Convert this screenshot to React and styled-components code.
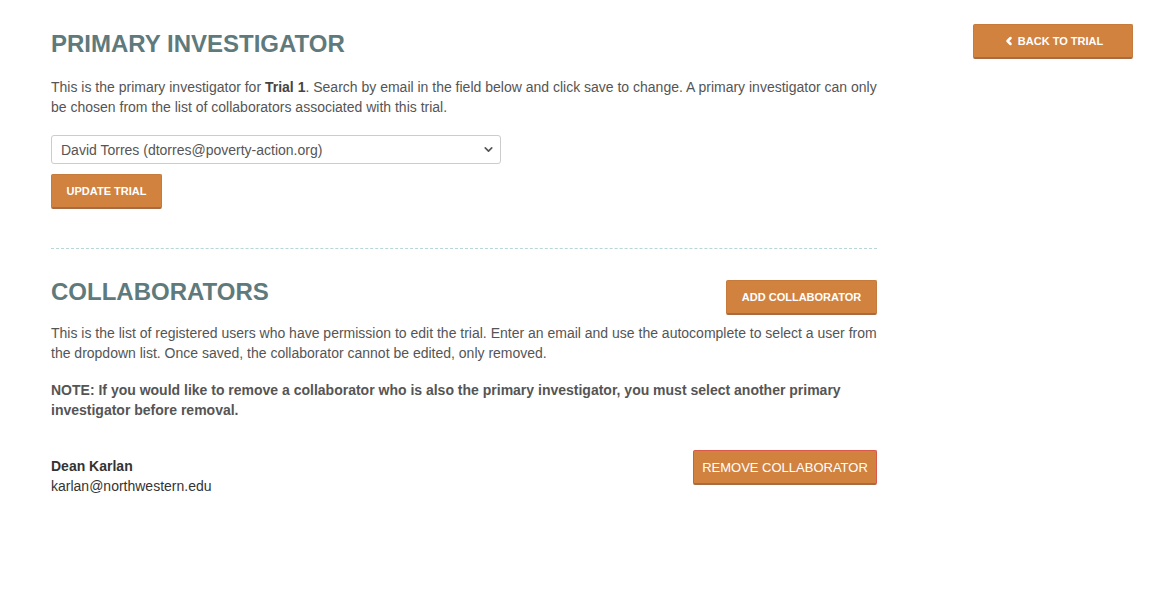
import React, { useState } from 'react'
import styled, { createGlobalStyle } from 'styled-components'
import { ChevronLeft, ChevronDown } from 'lucide-react'

const GlobalStyle = createGlobalStyle`
    body {
        margin: 0;
        background: #fff;
        font-family: "Liberation Sans", Arial, sans-serif;
        color: #555;
    }
`

const Page = styled.div`
    display: flex;
    padding: 24px 28px 40px 51px;
`
const Main = styled.div`
    width: 826px;
    padding-top: 7px;
`
const Aside = styled.div`
    flex: 1;
    display: flex;
    justify-content: flex-end;
    align-items: flex-start;
`
const Heading = styled.h2`
    margin: 0;
    font-size: 24px;
    line-height: 26px;
    font-weight: bold;
    color: #5e7a7c;
    text-transform: uppercase;
`
const Text = styled.p`
    margin: ${props => props.top || 0}px 0 0;
    font-size: 14px;
    line-height: 20px;
    color: #555;
    font-weight: ${props => props.bold ? 'bold' : 'normal'};
    b { color: #444; }
`
const Button = styled.button`
    display: inline-flex;
    align-items: center;
    justify-content: center;
    gap: 3px;
    width: ${props => props.width}px;
    height: 35px;
    margin-top: ${props => props.top || 0}px;
    padding: 0;
    background-color: #d2823f;
    color: #fff;
    font-family: "Liberation Sans", Arial, sans-serif;
    font-size: ${props => props.big ? 13 : 11}px;
    font-weight: ${props => props.big ? 'normal' : 'bold'};
    text-transform: uppercase;
    border: 1px solid ${props => props.danger ? '#d8584a' : '#c67a3c'};
    border-bottom: 2px solid #a66b43;
    border-radius: 2px;
    cursor: pointer;
    flex-shrink: 0;
`
const SelectWrap = styled.div`
    position: relative;
    width: 450px;
    margin-top: 18px;
`
const Select = styled.select`
    width: 100%;
    height: 29px;
    padding: 0 30px 0 9px;
    appearance: none;
    border: 1px solid #ccc;
    border-radius: 3px;
    background: #fff;
    color: #555;
    font-family: "Liberation Sans", Arial, sans-serif;
    font-size: 14px;
`
const Caret = styled.span`
    position: absolute;
    right: 6px;
    top: 8px;
    display: flex;
    color: #555;
    pointer-events: none;
`
const Divider = styled.hr`
    margin: 39px 0 30px;
    border: 0;
    border-top: 1px dashed #b7d6d6;
`
const HeadRow = styled.div`
    display: flex;
    justify-content: space-between;
    align-items: flex-start;
    button { margin-top: 1px; }
`
const CollabRow = styled.div`
    display: flex;
    justify-content: space-between;
    align-items: flex-start;
    margin-top: 30px;
`
const Person = styled.div`
    padding-top: 6px;
    font-size: 14px;
    line-height: 20px;
    color: #333;
`
const Name = styled.div`
    font-weight: bold;
    color: #333;
`

const App = () => {
    const [pi, setPi] = useState('dtorres')

    return (
        <>
            <GlobalStyle />
            <Page>
                <Main>
                    <Heading>Primary Investigator</Heading>
                    <Text top={20}>
                        This is the primary investigator for <b>Trial 1</b>. Search by email in the field below and click save to change. A primary investigator can only be chosen from the list of collaborators associated with this trial.
                    </Text>
                    <SelectWrap>
                        <Select value={pi} onChange={e => setPi(e.target.value)}>
                            <option value="dtorres">David Torres (dtorres@poverty-action.org)</option>
                            <option value="karlan">Dean Karlan (karlan@northwestern.edu)</option>
                        </Select>
                        <Caret><ChevronDown size={13} strokeWidth={3} /></Caret>
                    </SelectWrap>
                    <Button width={111} top={10}>Update Trial</Button>

                    <Divider />

                    <HeadRow>
                        <Heading>Collaborators</Heading>
                        <Button width={151}>Add Collaborator</Button>
                    </HeadRow>
                    <Text top={8}>
                        This is the list of registered users who have permission to edit the trial. Enter an email and use the autocomplete to select a user from the dropdown list. Once saved, the collaborator cannot be edited, only removed.
                    </Text>
                    <Text top={17} bold>
                        NOTE: If you would like to remove a collaborator who is also the primary investigator, you must select another primary investigator before removal.
                    </Text>

                    <CollabRow>
                        <Person>
                            <Name>Dean Karlan</Name>
                            <div>karlan@northwestern.edu</div>
                        </Person>
                        <Button width={184} big danger>Remove Collaborator</Button>
                    </CollabRow>
                </Main>
                <Aside>
                    <Button width={160}>
                        <ChevronLeft size={12} strokeWidth={5} />
                        Back to Trial
                    </Button>
                </Aside>
            </Page>
        </>
    )
}

export default App
